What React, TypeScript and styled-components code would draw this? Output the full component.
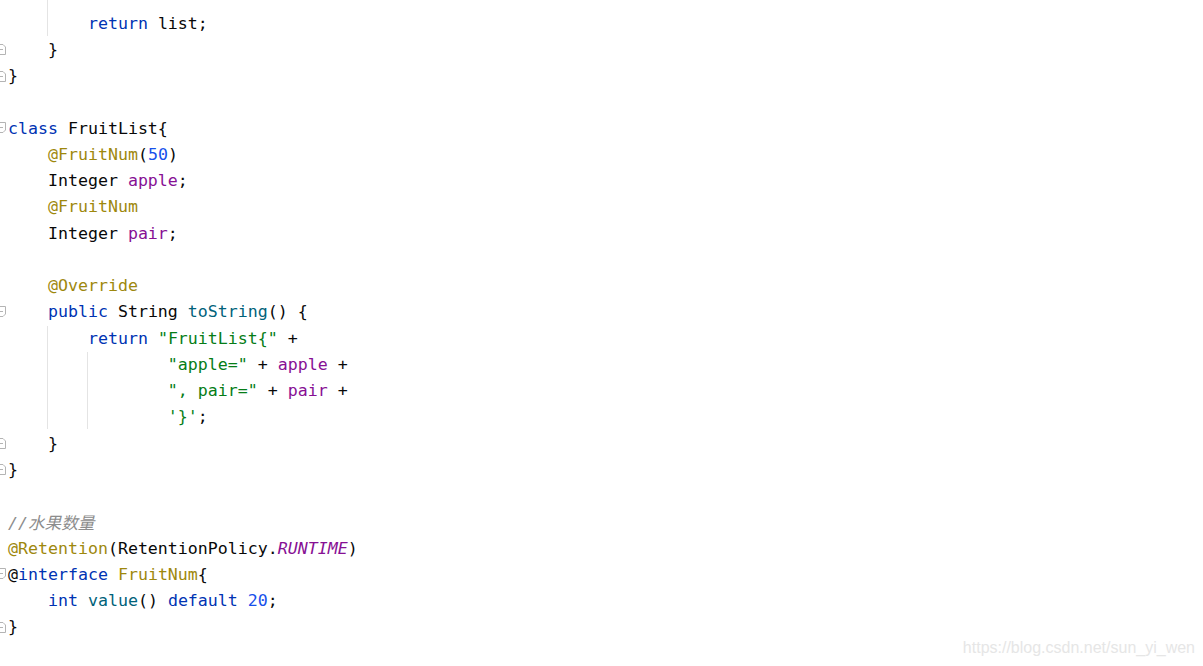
import React from "react";
import styled, { createGlobalStyle } from "styled-components";

const Global = createGlobalStyle`
  html, body { margin: 0; padding: 0; background: #ffffff; }
  body { width: 1203px; height: 666px; overflow: hidden; }
`;

const C = {
  kw: "#0033B3",
  ann: "#9E880D",
  str: "#067D17",
  num: "#1750EB",
  field: "#871094",
  method: "#00627A",
  comment: "#8C8C8C",
  text: "#080808",
};

const Page = styled.div`
  position: relative;
  width: 1203px;
  height: 666px;
  background: #ffffff;
  overflow: hidden;
`;

const Editor = styled.div`
  display: flex;
  flex-direction: column;
  padding-top: 10px;
  font-family: "DejaVu Sans Mono", "Noto Sans CJK SC", monospace;
  font-size: 16.6px;
  color: ${C.text};
`;

const Line = styled.div`
  position: relative;
  display: flex;
  align-items: center;
  height: 26.25px;
  white-space: pre;
`;

const Gutter = styled.div`
  width: 8px;
  height: 100%;
  display: flex;
  align-items: center;
  flex: none;
`;

const Code = styled.div`
  display: flex;
  align-items: center;
  white-space: pre;
`;

const Tok = styled.span<{ $c: string; $i?: boolean }>`
  color: ${(p) => p.$c};
  font-style: ${(p) => (p.$i ? "italic" : "normal")};
`;

const Guide = styled.span<{ $top?: number; $bottom?: number }>`
  position: absolute;
  top: ${(p) => p.$top ?? 0}px;
  bottom: ${(p) => p.$bottom ?? 0}px;
  width: 1px;
  background: #e4e4e4;
`;

const Watermark = styled.div`
  position: absolute;
  right: 8px;
  bottom: 9px;
  font-family: "Liberation Sans", Arial, sans-serif;
  font-size: 16px;
  color: #e6e6e6;
`;

const FoldSvg = styled.svg`
  display: block;
  flex: none;
`;

const FoldEnd = () => (
  <FoldSvg width="8" height="12" viewBox="0 0 8 12">
    <path d="M-4 11.5 H5.5 V4 L3 1.5 H-4 Z" fill="#ffffff" stroke="#b4b4b4" strokeWidth="1" />
    <path d="M-1 6.5 H3" stroke="#b4b4b4" strokeWidth="1" />
  </FoldSvg>
);

const FoldStart = () => (
  <FoldSvg width="8" height="12" viewBox="0 0 8 12">
    <path d="M-4 0.5 H5.5 V8 L3 10.5 H-4 Z" fill="#ffffff" stroke="#b4b4b4" strokeWidth="1" />
    <path d="M-1 5.5 H3" stroke="#b4b4b4" strokeWidth="1" />
  </FoldSvg>
);

type T = [string, string, boolean?];
type L = { toks: T[]; fold?: "start" | "end"; guides?: { x: number; top?: number; bottom?: number }[] };

const t = (s: string, c: string = C.text, i?: boolean): T => [s, c, i];

const lines: L[] = [
  { toks: [t("        "), t("return", C.kw), t(" list;")], guides: [{ x: 39, top: -10 }] },
  { toks: [t("    }")], fold: "end" },
  { toks: [t("}")], fold: "end" },
  { toks: [] },
  { toks: [t("class", C.kw), t(" FruitList{")], fold: "start" },
  { toks: [t("    "), t("@FruitNum", C.ann), t("("), t("50", C.num), t(")")] },
  { toks: [t("    Integer "), t("apple", C.field), t(";")] },
  { toks: [t("    "), t("@FruitNum", C.ann)] },
  { toks: [t("    Integer "), t("pair", C.field), t(";")] },
  { toks: [] },
  { toks: [t("    "), t("@Override", C.ann)] },
  { toks: [t("    "), t("public", C.kw), t(" String "), t("toString", C.method), t("() {")], fold: "start" },
  { toks: [t("        "), t("return", C.kw), t(" "), t('"FruitList{"', C.str), t(" +")], guides: [{ x: 39, top: 1 }] },
  {
    toks: [t("                "), t('"apple="', C.str), t(" + "), t("apple", C.field), t(" +")],
    guides: [{ x: 39 }, { x: 79, top: 1 }],
  },
  {
    toks: [t("                "), t('", pair="', C.str), t(" + "), t("pair", C.field), t(" +")],
    guides: [{ x: 39 }, { x: 79 }],
  },
  { toks: [t("                "), t("'}'", C.str), t(";")], guides: [{ x: 39, bottom: 1 }, { x: 79, bottom: 1 }] },
  { toks: [t("    }")], fold: "end" },
  { toks: [t("}")], fold: "end" },
  { toks: [] },
  { toks: [t("//水果数量", C.comment, true)] },
  { toks: [t("@Retention", C.ann), t("(RetentionPolicy."), t("RUNTIME", C.field, true), t(")")] },
  { toks: [t("@"), t("interface", C.kw), t(" "), t("FruitNum", C.ann), t("{")], fold: "start" },
  { toks: [t("    "), t("int", C.kw), t(" "), t("value", C.method), t("() "), t("default", C.kw), t(" "), t("20", C.num), t(";")] },
  { toks: [t("}")], fold: "end" },
];

export default function App() {
  return (
    <Page>
      <Global />
      <Editor>
        {lines.map((ln, i) => (
          <Line key={i}>
            <Gutter>{ln.fold === "start" ? <FoldStart /> : ln.fold === "end" ? <FoldEnd /> : null}</Gutter>
            {ln.guides?.map((g, j) => (
              <Guide key={j} style={{ left: g.x + 8 }} $top={g.top} $bottom={g.bottom} />
            ))}
            <Code>
              {ln.toks.map(([s, c, it], j) => (
                <Tok key={j} $c={c} $i={it}>
                  {s}
                </Tok>
              ))}
            </Code>
          </Line>
        ))}
      </Editor>
      <Watermark>https://blog.csdn.net/sun_yi_wen</Watermark>
    </Page>
  );
}
